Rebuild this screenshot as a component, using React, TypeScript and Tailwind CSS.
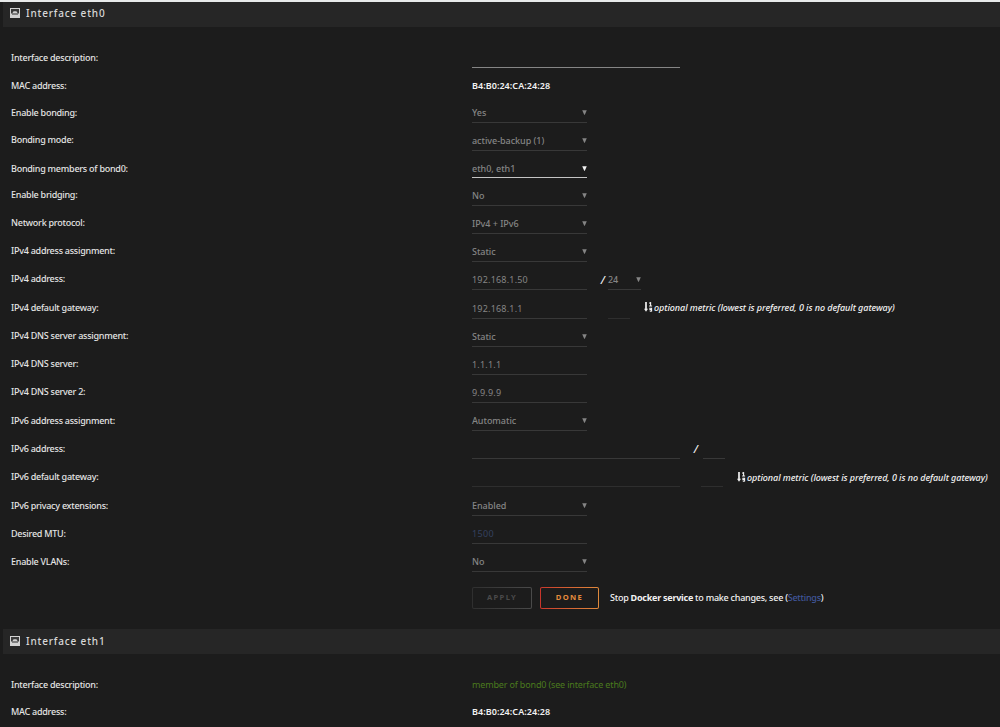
import type { ReactNode } from "react"
import { clsx } from "clsx"

function PortIcon() {
  return (
    <svg viewBox="0 0 10 10" className="h-[10px] w-[10px] shrink-0">
      <path d="M0 0h10v10H0z" fill="#d2d2d2" />
      <path d="M1 1h8v4.4H7.9L6.4 3.2H3.6L2.1 5.4H1z" fill="#3a3a3a" />
      <path d="M2 6h6" stroke="#2a2a2a" strokeWidth="1" />
    </svg>
  )
}

function SortIcon() {
  return (
    <svg viewBox="0 0 9 10" className="h-[10px] w-[9px] shrink-0" fill="none" stroke="#f2f2f2">
      <path d="M2 0v8" strokeWidth="1.7" />
      <path d="M0 6.8h4L2 9.8z" fill="#f2f2f2" stroke="none" />
      <path d="M5.2 1.2 6.6.6v3.4M5.1 4h3" strokeWidth="1.1" />
      <path d="M7.6 9.4V6.2H5.9v1.4h1.7M7.6 9.3H5.8" strokeWidth="1.1" />
    </svg>
  )
}

function Arrow({ active }: { active?: boolean }) {
  return (
    <svg viewBox="0 0 5 5" className="h-[5px] w-[5px] shrink-0">
      <path d="M.2.2h4.6L2.8 4.8h-.6z" fill={active ? "#f2f2f2" : "#858585"} />
    </svg>
  )
}

function SectionTitle({ children, className }: { children: ReactNode; className?: string }) {
  return (
    <div className={clsx("ml-[3px] flex h-[25px] items-center gap-[6px] bg-[#262626] pl-[7px]", className)}>
      <PortIcon />
      <h2 className="whitespace-nowrap text-[10px] leading-none font-medium tracking-[0.84px] text-[#d8d8d8]">{children}</h2>
    </div>
  )
}

type FieldProps = {
  value?: string
  width?: string
  line?: string
  select?: boolean
  active?: boolean
  className?: string
}

function Field({ value, width = "w-[115px]", line = "border-[#383838]", select, active, className }: FieldProps) {
  return (
    <div className={clsx("flex items-start justify-between border-b", active ? "h-[16px]" : "h-[17px]", width, line, className)}>
      <span className={clsx("text-[9px] leading-[13px] text-[#858585]", select ? "font-medium tracking-[-0.03px]" : "tracking-[0.2px]")}>
        {value}
      </span>
      {select && (
        <span className="pt-[4px]">
          <Arrow active={active} />
        </span>
      )}
    </div>
  )
}

function Row({ label, height = "h-[28px]", low, children }: { label: string; height?: string; low?: boolean; children: ReactNode }) {
  return (
    <div className={clsx("flex items-end whitespace-nowrap pl-[11px]", height)}>
      <div
        className={clsx(
          "w-[461px] shrink-0 text-[9px] leading-[13px] font-medium tracking-[-0.25px] text-[#e4e4e4]",
          low ? "h-[17px]" : "h-[18px]",
        )}
      >
        {label}
      </div>
      {children}
    </div>
  )
}

function Mac() {
  return <div className="h-[18px] text-[9px] leading-[13px] font-semibold tracking-[0.05px] text-[#f2f2f2]">B4:B0:24:CA:24:28</div>
}

function MetricHint() {
  return (
    <div className="flex h-[18px] gap-px pt-[2px]">
      <SortIcon />
      <span className="-mt-px text-[9px] leading-[13px] font-medium tracking-[-0.06px] text-[#f2f2f2] italic">
        optional metric (lowest is preferred, 0 is no default gateway)
      </span>
    </div>
  )
}

function Slash() {
  return <span className="h-[17px] text-[11px] leading-[14px] font-medium text-[#f2f2f2] italic">/</span>
}

export default function App() {
  return (
    <div className="h-[727px] w-[1000px] overflow-hidden border-t-2 border-[#e8eaea] bg-[#1c1c1c] font-['Noto_Sans',sans-serif]">
      <SectionTitle className="pb-[3px]">Interface eth0</SectionTitle>
      <Row label="Interface description:" height="h-[42px]">
        <Field width="w-[208px]" line="border-[#858585]" className="mb-px" />
      </Row>
      <Row label="MAC address:">
        <Mac />
      </Row>
      <Row label="Enable bonding:" height="h-[26px]" low>
        <Field value="Yes" select />
      </Row>
      <Row label="Bonding mode:">
        <Field value="active-backup (1)" select />
      </Row>
      <Row label="Bonding members of bond0:" low>
        <Field value="eth0, eth1" select active line="border-[#c4c4c4]" className="mb-px" />
      </Row>
      <Row label="Enable bridging:" height="h-[27px]">
        <Field value="No" select />
      </Row>
      <Row label="Network protocol:">
        <Field value="IPv4 + IPv6" select />
      </Row>
      <Row label="IPv4 address assignment:">
        <Field value="Static" select />
      </Row>
      <Row label="IPv4 address:">
        <Field value="192.168.1.50" />
        <div className="flex w-[21px] justify-end pr-[3px]">
          <Slash />
        </div>
        <Field value="24" width="w-[33px]" select />
      </Row>
      <Row label="IPv4 default gateway:" height="h-[29px]">
        <Field value="192.168.1.1" />
        <Field width="w-[22px]" line="border-[#2e2e2e]" className="ml-[21px]" />
        <div className="mb-px ml-[14px]">
          <MetricHint />
        </div>
      </Row>
      <Row label="IPv4 DNS server assignment:">
        <Field value="Static" select />
      </Row>
      <Row label="IPv4 DNS server:">
        <Field value="1.1.1.1" />
      </Row>
      <Row label="IPv4 DNS server 2:">
        <Field value="9.9.9.9" />
      </Row>
      <Row label="IPv6 address assignment:" low>
        <Field value="Automatic" select />
      </Row>
      <Row label="IPv6 address:" low>
        <Field width="w-[208px]" />
        <div className="flex w-[23px] justify-end pr-[5px]">
          <Slash />
        </div>
        <Field width="w-[22px]" />
      </Row>
      <Row label="IPv6 default gateway:" low>
        <Field width="w-[208px]" line="border-[#2e2e2e]" />
        <Field width="w-[22px]" line="border-[#2e2e2e]" className="ml-[21px]" />
        <div className="-mb-px ml-[14px]">
          <MetricHint />
        </div>
      </Row>
      <Row label="IPv6 privacy extensions:" height="h-[29px]" low>
        <Field value="Enabled" select />
      </Row>
      <Row label="Desired MTU:" low>
        <div className="flex h-[17px] w-[115px] border-b border-[#383838] text-[9px] leading-[13px] tracking-[0.35px] text-[#34415f]">
          1500
        </div>
      </Row>
      <Row label="Enable VLANs:" low>
        <Field value="No" select />
      </Row>

      <div className="mt-[15px] flex h-[22px] items-center pl-[472px] text-[7.6px] font-bold tracking-[1.35px]">
        <button className="h-[22px] w-[60px] rounded-[2px] bg-linear-to-r from-[#2f2f2f] to-[#4a4a4a] p-px">
          <span className="flex h-full items-center justify-center rounded-[1px] bg-[#1c1c1c] text-[#4a4a4a]">APPLY</span>
        </button>
        <button className="ml-[8px] h-[22px] w-[59px] rounded-[2px] bg-linear-to-r from-[#c8352b] to-[#e08a3c] p-px">
          <span className="flex h-full items-center justify-center rounded-[1px] bg-[#1c1c1c] text-[#e58b3c]">DONE</span>
        </button>
        <p className="ml-[11px] text-[9px] font-medium tracking-[-0.25px] whitespace-nowrap text-[#f2f2f2]">
          Stop <b>Docker service</b> to make changes, see (<span className="text-[#40569a]">Settings</span>)
        </p>
      </div>

      <SectionTitle className="mt-[20px] pb-px">Interface eth1</SectionTitle>
      <Row label="Interface description:" height="h-[42px]">
        <div className="h-[18px] text-[9px] leading-[13px] tracking-[-0.16px] text-[#4a7a1c]">member of bond0 (see interface eth0)</div>
      </Row>
      <Row label="MAC address:" height="h-[27px]">
        <Mac />
      </Row>
    </div>
  )
}
